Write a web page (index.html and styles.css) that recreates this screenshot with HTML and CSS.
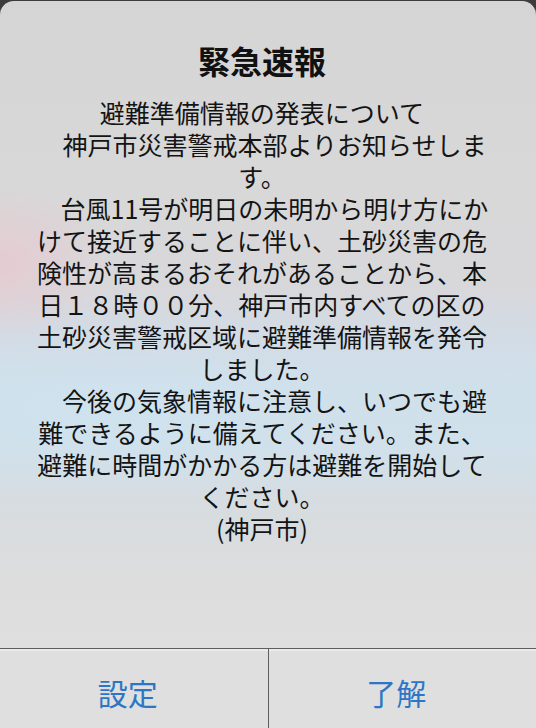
FILE: index.html
```html
<!DOCTYPE html>
<html lang="ja">
<head>
<meta charset="utf-8">
<title>緊急速報</title>
<link rel="stylesheet" href="styles.css">
</head>
<body>
<div class="alert">
  <div class="content">
    <h1 class="title">緊急速報</h1>
    <p class="message">避難準備情報の発表について<br>　神戸市災害警戒本部よりお知らせします。<br>　台風11号が明日の未明から明け方にかけて接近することに伴い、土砂災害の危険性が高まるおそれがあることから、本日１８時００分、神戸市内すべての区の土砂災害警戒区域に避難準備情報を発令しました。<br>　今後の気象情報に注意し、いつでも避難できるように備えてください。また、避難に時間がかかる方は避難を開始してください。<br>(神戸市)</p>
  </div>
  <div class="buttons">
    <div class="button">設定</div>
    <div class="button">了解</div>
  </div>
</div>
</body>
</html>
```
FILE: styles.css
```css
html, body {
  margin: 0;
  padding: 0;
}
body {
  width: 536px;
  height: 728px;
  overflow: hidden;
  background: #3c3c3c;
  font-family: "Noto Sans CJK JP", "Noto Sans", sans-serif;
  color: #141414;
}
.alert {
  margin-top: 1px;
  height: 727px;
  border-radius: 14px 14px 0 0;
  display: flex;
  flex-direction: column;
  overflow: hidden;
  background:
    radial-gradient(ellipse 110px 80px at 0 262px, rgba(230, 202, 208, 0.9), rgba(230, 202, 208, 0)),
    radial-gradient(ellipse 220px 70px at 120px 410px, rgba(205, 228, 242, 0.6), rgba(205, 228, 242, 0)),
    linear-gradient(to bottom, #d5d5d5 0, #d8d8d8 190px, #d8d8dc 290px, #d3dbe4 330px, #d0e0eb 380px, #d1e0ea 450px, #d7dcdf 510px, #dddddd 580px, #e0e0e0 100%);
}
.content {
  flex: 1;
  padding: 39px 43px 0 31px;
  text-align: center;
}
.title {
  margin: 0 0 16px;
  font-size: 32px;
  line-height: 40px;
  font-weight: 700;
  color: #111;
}
.message {
  margin: 0;
  font-size: 25px;
  line-height: 32px;
  font-weight: 400;
}
.buttons {
  height: 79px;
  border-top: 1px solid #5e5e5e;
  display: flex;
  background: #dfdfdf;
}
.button {
  flex: 1;
  display: flex;
  align-items: center;
  justify-content: center;
  padding: 6px 12px 0 0;
  font-size: 30px;
  color: #2d76c6;
  box-shadow: inset 0 2px 0 rgba(255, 255, 255, 0.35);
}
.button + .button {
  border-left: 1px solid #5e5e5e;
}
```
